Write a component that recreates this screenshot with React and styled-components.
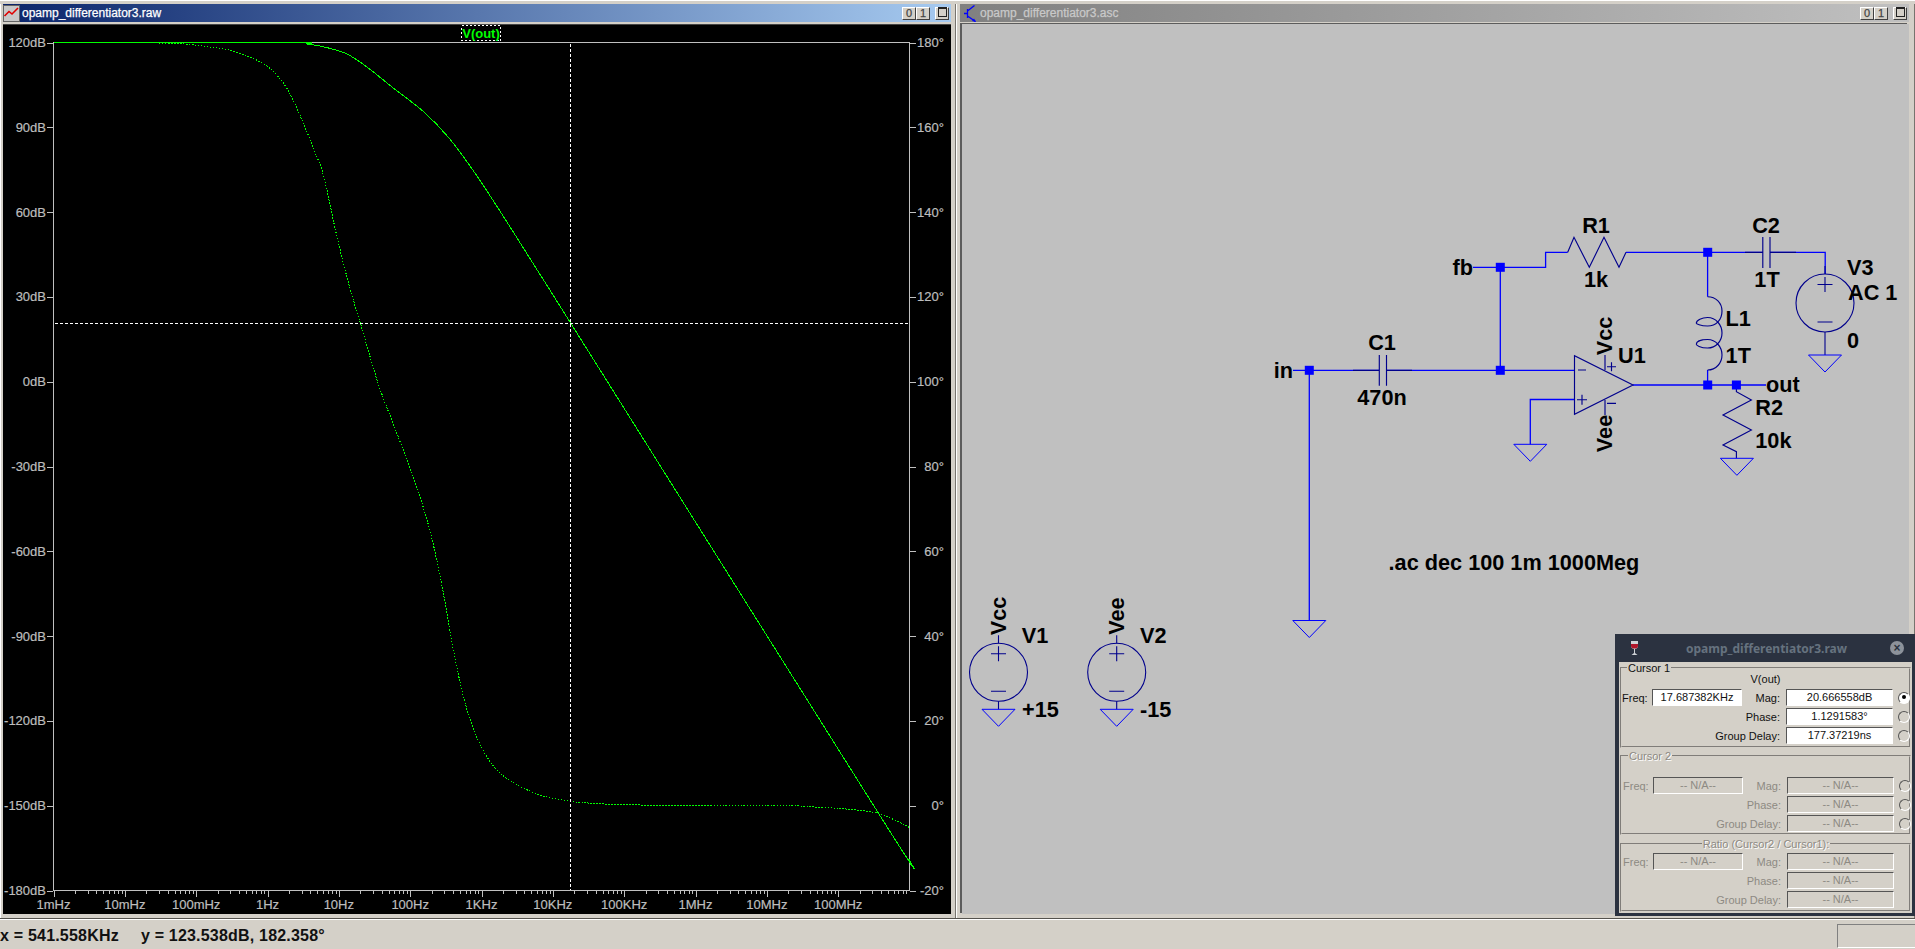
import React from 'react'
import styled, { createGlobalStyle } from 'styled-components'

const Global = createGlobalStyle`
    html, body {
        margin: 0;
        padding: 0;
        overflow: hidden;
        background: #d4d0c8;
    }
    #root {
        width: 1915px;
        height: 949px;
    }
`

const Desktop = styled.div`
    position: relative;
    width: 1915px;
    height: 949px;
    display: flex;
    flex-direction: column;
    background: #d4d0c8;
    font-family: "Liberation Sans", Arial, sans-serif;
    overflow: hidden;
`

const WindowRow = styled.div`
    display: flex;
    height: 919px;
    flex: none;
    padding-top: 4px;
    box-sizing: border-box;
    border-top: 1px solid #fff;
    border-bottom: 1px solid #55534e;
`

const MdiWindow = styled.section`
    box-sizing: border-box;
    width: ${p => p.$width}px;
    height: 914px;
    margin-top: -1px;
    padding: 0 ${p => p.$padRight}px 0 ${p => p.$padLeft}px;
    display: flex;
    flex-direction: column;
    background: #d4d0c8;
    border-left: 1px solid #fff;
    border-right: 1px solid #77746e;
`

const TitleBar = styled.header`
    height: 18px;
    flex: none;
    display: flex;
    align-items: center;
    gap: ${p => p.$gap}px;
    padding: 0 2px 0 ${p => p.$padLeft}px;
    background: ${p => p.$active
        ? 'linear-gradient(90deg, #0a246a, #a6caf0)'
        : 'linear-gradient(90deg, #808080, #c0c0c0)'};
    color: ${p => p.$active ? '#fff' : '#c9c9c9'};
    font-size: 12px;
    -webkit-text-stroke: 0.25px currentColor;
    white-space: nowrap;
`

const TitleButtons = styled.div`
    margin-left: auto;
    display: flex;
`

const TitleButton = styled.button`
    box-sizing: border-box;
    width: 14px;
    height: 13px;
    padding: 0;
    margin-left: ${p => p.$far ? 5 : 0}px;
    border: 1px solid;
    border-color: #fff #404040 #404040 #fff;
    background: #d4d0c8;
    color: #444;
    font: 11px/11px "Liberation Sans", Arial, sans-serif;
    display: flex;
    align-items: center;
    justify-content: center;
`

const RestoreGlyph = styled.span`
    display: block;
    box-sizing: border-box;
    width: 9px;
    height: 10px;
    margin-top: -2px;
    border: 1px solid #222;
    border-top-width: 2px;
    background: #d4d0c8;
`

const Canvas = styled.svg`
    display: block;
    flex: none;
    margin: 2px 0 0 ${p => p.$inset}px;
    width: ${p => p.$width}px;
    height: 890px;
    background: ${p => p.$bg};
    box-shadow: ${p => p.$inset ? '-2px -1px 0 #5c5c5c' : 'inset 0 1px 0 #444'};
`

const AxisText = styled.text`
    font: 13px "Liberation Sans", Arial, sans-serif;
    fill: #bdbdbd;
    stroke: #bdbdbd;
    stroke-width: 0.2px;
`

const TraceName = styled.text`
    font: bold 13px "Liberation Sans", Arial, sans-serif;
    fill: #00ff00;
`

const PartLabel = styled.text`
    font: bold 21.7px "Liberation Sans", Arial, sans-serif;
    fill: #000;
`

const StatusBar = styled.footer`
    flex: 1;
    min-height: 0;
    display: flex;
    border-top: 1px solid #fff;
    font-size: 16px;
    font-weight: bold;
    color: #111;
    line-height: 32px;
    white-space: nowrap;
`

const StatusValue = styled.span`
    margin-right: 22px;
    letter-spacing: 0.2px;
`

const StatusPanel = styled.div`
    align-self: flex-start;
    box-sizing: border-box;
    margin: 4px 0 0 auto;
    width: 78px;
    height: 24px;
    border-left: 1px solid #808080;
    border-top: 1px solid #808080;
    border-bottom: 1px solid #fff;
`

const Dialog = styled.aside`
    position: absolute;
    right: 0;
    top: 634px;
    width: 300px;
    height: 282px;
    box-sizing: border-box;
    display: flex;
    flex-direction: column;
    background: #2b3240;
    padding: 0 3px 3px 4px;
`

const DialogTitle = styled.header`
    position: relative;
    height: 28px;
    flex: none;
    display: flex;
    align-items: center;
    justify-content: center;
    padding-left: 2px;
    color: #66727f;
    font: bold 12px "Noto Sans", sans-serif;
`

const WineIcon = styled.svg`
    position: absolute;
    left: 11px;
    top: 6px;
`

const CloseButton = styled.span`
    position: absolute;
    right: 8px;
    top: 7px;
    width: 14px;
    height: 14px;
    border-radius: 50%;
    background: #8d929b;
    color: #2b3240;
    font: bold 12px/14px "Liberation Sans", sans-serif;
    text-align: center;
`

const DialogBody = styled.div`
    flex: 1;
    display: flex;
    flex-direction: column;
    background: #d4d0c8;
    padding: 0 1px 0 1px;
`

const Group = styled.fieldset`
    margin: ${p => p.$top}px 0 0;
    padding: ${p => p.$padTop}px 0 0 ${p => p.$shift}px;
    min-width: 0;
    height: ${p => p.$height}px;
    box-sizing: border-box;
    border: 2px groove #d4d0c8;
    font-size: 11px;
    color: #111;
`

const GroupTitle = styled.legend`
    margin-left: ${p => p.$center ? 'auto' : '5px'};
    margin-right: ${p => p.$center ? 'auto' : '0'};
    padding: 0 1px;
    font-size: 11px;
    line-height: 12px;
    color: ${p => p.$off ? '#8d8a83' : '#111'};
    text-shadow: ${p => p.$off ? '1px 1px 0 #fff' : 'none'};
`

const TraceTitle = styled.div`
    height: 15px;
    line-height: 11px;
    text-align: center;
`

const FieldGrid = styled.div`
    display: grid;
    grid-template-columns: 30px 90px 44px 107px 22px;
    grid-auto-rows: 17px;
    row-gap: 2px;
    align-items: center;
`

const FieldLabel = styled.label`
    grid-column: ${p => p.$span ? '1 / 4' : 'auto'};
    text-align: ${p => p.$first ? 'left' : 'right'};
    padding-right: ${p => p.$first ? 0 : 6}px;
    color: ${p => p.$off ? '#8d8a83' : '#111'};
`

const FieldValue = styled.output`
    grid-column: ${p => p.$wide ? 4 : 'auto'};
    box-sizing: border-box;
    height: 17px;
    display: block;
    line-height: 15px;
    text-align: center;
    border: 1px solid;
    border-color: #555 #fff #fff #555;
    background: ${p => p.$off ? '#d4d0c8' : '#fff'};
    color: ${p => p.$off ? '#8d8a83' : '#111'};
`

const Radio = styled.span`
    position: relative;
    justify-self: center;
    box-sizing: border-box;
    width: 12px;
    height: 12px;
    border-radius: 50%;
    border: 1.5px solid;
    border-color: #555 #fff #fff #555;
    background: ${p => p.$on ? '#fff' : 'transparent'};
    &::after {
        content: '';
        display: ${p => p.$on ? 'block' : 'none'};
        position: absolute;
        left: 2.5px;
        top: 2.5px;
        width: 4px;
        height: 4px;
        border-radius: 50%;
        background: #000;
    }
`

// ---- plot data, page coordinates read off the original trace ----

const PLOT_LEFT = 53.5
const PLOT_RIGHT = 909.5
const PLOT_TOP = 42.5
const PLOT_BOTTOM = 890.5
const DECADE = (PLOT_RIGHT - PLOT_LEFT) / 12
const DIV_Y = (PLOT_BOTTOM - PLOT_TOP) / 10

const magnitude = [
    [54, 42.5], [289, 42.5], [307, 44], [326.5, 47.5], [347, 54], [367, 67], [392, 87],
    [424.5, 112.5], [449, 138], [473.5, 171], [498, 208], [522.4, 246.5], [547, 285.5],
    [570.6, 323], [880, 815.7], [909.5, 860],
]

const phase = [
    [147, 42.7], [183.7, 44], [208, 46.7], [228.6, 50], [249, 56.7], [265.3, 65], [277.6, 76],
    [289, 92], [302, 120], [314, 150], [323.6, 176], [335.9, 232], [348, 281], [361.5, 327],
    [378.6, 384.7], [397, 433.6], [415, 482], [430, 531], [442, 586], [454, 653], [466.5, 708],
    [482.4, 749], [503, 775.5], [537, 794], [570, 801], [588, 803], [640, 805], [773, 805.3],
    [820, 807.3], [856.7, 810], [880, 814], [903, 824], [909.5, 827.7],
]

const smooth = pts => {
    let d = `M${pts[0][0]} ${pts[0][1]}`
    for (let i = 0; i < pts.length - 1; i++) {
        const p0 = pts[i - 1] || pts[i]
        const p1 = pts[i]
        const p2 = pts[i + 1]
        const p3 = pts[i + 2] || p2
        const c1 = [p1[0] + (p2[0] - p0[0]) / 6, p1[1] + (p2[1] - p0[1]) / 6]
        const c2 = [p2[0] - (p3[0] - p1[0]) / 6, p2[1] - (p3[1] - p1[1]) / 6]
        d += `C${c1[0]} ${c1[1]} ${c2[0]} ${c2[1]} ${p2[0]} ${p2[1]}`
    }
    return d
}

const freqLabels = ['1mHz', '10mHz', '100mHz', '1Hz', '10Hz', '100Hz', '1KHz', '10KHz', '100KHz', '1MHz', '10MHz', '100MHz']

const Plot = () => {
    const minor = []
    for (let d = 0; d < 12; d++) {
        for (let m = 2; m < 10; m++) minor.push(PLOT_LEFT + (d + Math.log10(m)) * DECADE)
    }
    return (
        <Canvas $width={948} $inset={0} $bg="#000" viewBox="3 24 948 890">
            <g stroke="#c0c0c0" shapeRendering="crispEdges" fill="none">
                <rect x={PLOT_LEFT} y={PLOT_TOP} width={PLOT_RIGHT - PLOT_LEFT} height={PLOT_BOTTOM - PLOT_TOP} />
                {Array.from({ length: 11 }, (_, i) => (
                    <path key={i} d={`M47 ${Math.round(PLOT_TOP + i * DIV_Y) + 0.5}H53M910 ${Math.round(PLOT_TOP + i * DIV_Y) + 0.5}H916`} />
                ))}
                {freqLabels.map((_, i) => (
                    <path key={i} d={`M${Math.round(PLOT_LEFT + i * DECADE) + 0.5} 891V897`} />
                ))}
                {minor.map((x, i) => (
                    <path key={i} d={`M${Math.round(x) + 0.5} 891V894`} />
                ))}
            </g>
            {Array.from({ length: 11 }, (_, i) => (
                <AxisText key={i} x={46} y={PLOT_TOP + i * DIV_Y + 4.5} textAnchor="end">{120 - i * 30}dB</AxisText>
            ))}
            {Array.from({ length: 11 }, (_, i) => (
                <AxisText key={i} x={944} y={PLOT_TOP + i * DIV_Y + 4.5} textAnchor="end">{180 - i * 20}°</AxisText>
            ))}
            {freqLabels.map((label, i) => (
                <AxisText key={label} x={PLOT_LEFT + i * DECADE} y={908.5} textAnchor="middle">{label}</AxisText>
            ))}
            <path d={smooth(phase)} fill="none" stroke="#00ff00" strokeDasharray="1.5 1.5" shapeRendering="crispEdges" />
            <path d={smooth(magnitude)} fill="none" stroke="#00ff00" shapeRendering="crispEdges" />
            <g stroke="#fff" strokeDasharray="3 2" shapeRendering="crispEdges">
                <path d="M570.5 44V890" />
                <path d="M55 323.5H909" />
            </g>
            <rect x="461.5" y="25.5" width="39" height="15" fill="#000" stroke="#fff" strokeDasharray="2 2" shapeRendering="crispEdges" />
            <TraceName x={481} y={38} textAnchor="middle">V(out)</TraceName>
        </Canvas>
    )
}

// ---- schematic parts ----

const WIRE = '#0000ff'
const PART = '#00008c'

const Ground = ({ x, y }) => (
    <path d={`M${x - 16.5} ${y}H${x + 16.5}L${x} ${y + 17}Z`} fill="none" stroke={WIRE} strokeWidth="1" />
)

const Junction = ({ x, y }) => <rect x={x - 4.5} y={y - 4.5} width="9" height="9" fill={WIRE} />

const Source = ({ x, y, lead }) => (
    <g fill="none" stroke={PART}>
        <circle cx={x} cy={y} r="29" strokeWidth="1.1" />
        <path d={`M${x} ${y - 37}V${y - 29}M${x} ${y - 26}V${y - 11}M${x - 7.5} ${y - 18.5}H${x + 7.5}M${x - 7.5} ${y + 19}H${x + 7.5}M${x} ${y + 29}V${y + 29 + lead}`} strokeWidth="1.1" />
        <Ground x={x} y={y + 29 + lead} />
    </g>
)

const VLabel = ({ x, y, children }) => (
    <PartLabel transform={`rotate(-90 ${x} ${y})`} x={x} y={y + 7.5} textAnchor="middle">{children}</PartLabel>
)

const Schematic = () => (
    <Canvas $width={947} $inset={2} $bg="#c0c0c0" viewBox="962 24 947 890">
        <g fill="none" stroke={WIRE} strokeWidth="1.3">
            <path d="M1293 370.3H1379M1386.5 370.3H1574.5" />
            <path d="M1309.3 370.3V620.5" />
            <path d="M1500.3 370.3V267.3M1473 267.3H1545.6V252.3H1567.7" />
            <path d="M1626 252.3H1762.8M1770 252.3H1825.2V274" />
            <path d="M1707.6 252.3V296.7" />
            <path d="M1633 385H1766" />
            <path d="M1574.5 399.5H1530.3V444.3" />
            <path d="M1707.6 370V385" />
        </g>
        <g fill="none" stroke={PART} strokeWidth="1.15">
            <path d="M1353 370.3H1379.3M1379.3 355V385.7M1386.5 355V385.7M1386.5 370.3H1412" />
            <path d="M1762.8 237V268M1770 237V268M1745 252.3H1762.8M1770 252.3H1796" />
            <path d="M1567.7 252.3L1574 237.3L1589.3 267.3L1604 237.3L1619 267.3L1626 252.3" />
            <path d="M1736.4 385V391.7L1751.4 400L1723 415L1751.4 430L1723 445L1736.4 451.7V458.3" />
            <path d="M1707.6 296.7C1716 296.7 1722 303 1722 311C1722 320 1716 326 1707.6 326C1700 326 1696.3 323.5 1696.3 323.3C1696.3 320 1702 317.5 1707.6 317.5C1716 317.5 1722 325 1722 333C1722 341 1716 348 1707.6 348C1700 348 1696.3 345 1696.3 344.3C1696.3 341 1702 339.5 1707.6 339.5C1716 339.5 1722 347 1722 355C1722 363 1716 370 1707.6 370" />
            <path d="M1574.5 355.7V414.3L1633 385Z" />
            <path d="M1578 370H1586M1577 399.7H1587M1582 394.7V404.7M1607 366.7H1616M1611.5 362.2V371.2M1607 403.3H1616" />
            <path d="M1605 355V370M1605 400V415" />
        </g>
        <Ground x={1309.3} y={620.5} />
        <Ground x={1530.3} y={444.3} />
        <Ground x={1736.9} y={458.3} />
        <Source x={1825} y={303} lead={23} />
        <Source x={998.5} y={672.3} lead={8} />
        <Source x={1116.7} y={672.3} lead={8} />
        <Junction x={1309.3} y={370.3} />
        <Junction x={1500.3} y={370.3} />
        <Junction x={1500.3} y={267.3} />
        <Junction x={1707.7} y={252.3} />
        <Junction x={1707.7} y={385} />
        <Junction x={1736.4} y={385} />

        <PartLabel x={1293} y={378} textAnchor="end">in</PartLabel>
        <PartLabel x={1473} y={275} textAnchor="end">fb</PartLabel>
        <PartLabel x={1766} y={392}>out</PartLabel>
        <PartLabel x={1382} y={350} textAnchor="middle">C1</PartLabel>
        <PartLabel x={1382} y={405} textAnchor="middle">470n</PartLabel>
        <PartLabel x={1596} y={232.5} textAnchor="middle">R1</PartLabel>
        <PartLabel x={1596} y={287} textAnchor="middle">1k</PartLabel>
        <PartLabel x={1766} y={232.5} textAnchor="middle">C2</PartLabel>
        <PartLabel x={1767} y={287} textAnchor="middle">1T</PartLabel>
        <PartLabel x={1847} y={275}>V3</PartLabel>
        <PartLabel x={1848} y={300}>AC 1</PartLabel>
        <PartLabel x={1847} y={348}>0</PartLabel>
        <PartLabel x={1725.6} y={326}>L1</PartLabel>
        <PartLabel x={1725.6} y={363}>1T</PartLabel>
        <PartLabel x={1755.3} y={415}>R2</PartLabel>
        <PartLabel x={1755.3} y={448}>10k</PartLabel>
        <PartLabel x={1618} y={363}>U1</PartLabel>
        <VLabel x={1604} y={336}>Vcc</VLabel>
        <VLabel x={1604} y={433.5}>Vee</VLabel>
        <VLabel x={998.3} y={616}>Vcc</VLabel>
        <VLabel x={1116.7} y={616}>Vee</VLabel>
        <PartLabel x={1021.7} y={643}>V1</PartLabel>
        <PartLabel x={1140} y={643}>V2</PartLabel>
        <PartLabel x={1022} y={716.5}>+15</PartLabel>
        <PartLabel x={1140} y={716.5}>-15</PartLabel>
        <PartLabel x={1388.6} y={569.5}>.ac dec 100 1m 1000Meg</PartLabel>
    </Canvas>
)

const GraphIcon = () => (
    <svg width="17" height="17" viewBox="0 0 17 17">
        <rect width="17" height="17" fill="#c8c8c8" />
        <rect x="0.5" y="0.5" width="16" height="16" fill="none" stroke="#000" strokeDasharray="1 1" />
        <path d="M1.5 11L6 6.5L9 9L15 3" fill="none" stroke="#e00000" strokeWidth="1.6" />
    </svg>
)

const TransistorIcon = () => (
    <svg width="13" height="17" viewBox="0 0 13 17">
        <path d="M0 8.5H3.5M3.5 4V13M3.5 6L10.5 0.5M3.5 11L11.5 16.5" fill="none" stroke="#0000ff" strokeWidth="1.3" />
        <path d="M12 17L8 16L10 13.5Z" fill="#0000ff" />
    </svg>
)

const WindowButtons = () => (
    <TitleButtons>
        <TitleButton>0</TitleButton>
        <TitleButton>1</TitleButton>
        <TitleButton $far><RestoreGlyph /></TitleButton>
    </TitleButtons>
)

const Fields = ({ freq, mag, phs, delay, off, radios, selected }) => (
    <FieldGrid>
        <FieldLabel $first $off={off}>Freq:</FieldLabel>
        <FieldValue $off={off}>{freq}</FieldValue>
        <FieldLabel $off={off}>Mag:</FieldLabel>
        <FieldValue $off={off}>{mag}</FieldValue>
        {radios ? <Radio $on={selected} /> : <span />}
        <FieldLabel $span $off={off}>Phase:</FieldLabel>
        <FieldValue $wide $off={off}>{phs}</FieldValue>
        {radios ? <Radio /> : <span />}
        <FieldLabel $span $off={off}>Group Delay:</FieldLabel>
        <FieldValue $wide $off={off}>{delay}</FieldValue>
        {radios ? <Radio /> : <span />}
    </FieldGrid>
)

const NA = '-- N/A--'

const CursorDialog = () => (
    <Dialog>
        <DialogTitle>
            <WineIcon width="9" height="16" viewBox="0 0 9 16">
                <path d="M1 1H8V6C8 8 6 9 5 9V13L7.5 15H1.5L4 13V9C3 9 1 8 1 6Z" fill="#cfd2d6" />
                <path d="M1 4H8V6C8 8 6 8.6 4.5 8.6C3 8.6 1 8 1 6Z" fill="#b0162a" />
            </WineIcon>
            opamp_differentiator3.raw
            <CloseButton>×</CloseButton>
        </DialogTitle>
        <DialogBody>
            <Group $top={0} $padTop={0} $shift={0} $height={86}>
                <GroupTitle>Cursor 1</GroupTitle>
                <TraceTitle>V(out)</TraceTitle>
                <Fields freq="17.687382KHz" mag="20.666558dB" phs="1.1291583°" delay="177.37219ns" radios selected />
            </Group>
            <Group $top={2} $padTop={15} $shift={1} $height={85}>
                <GroupTitle $off>Cursor 2</GroupTitle>
                <Fields freq={NA} mag={NA} phs={NA} delay={NA} off radios />
            </Group>
            <Group $top={3} $padTop={3} $shift={1} $height={74}>
                <GroupTitle $center $off>Ratio (Cursor2 / Cursor1):</GroupTitle>
                <Fields freq={NA} mag={NA} phs={NA} delay={NA} off />
            </Group>
        </DialogBody>
    </Dialog>
)

const App = () => (
    <Desktop>
        <Global />
        <WindowRow>
            <MdiWindow $width={956} $padLeft={2} $padRight={4}>
                <TitleBar $active $gap={2} $padLeft={0}>
                    <GraphIcon />
                    opamp_differentiator3.raw
                    <WindowButtons />
                </TitleBar>
                <Plot />
            </MdiWindow>
            <MdiWindow $width={959} $padLeft={3} $padRight={5}>
                <TitleBar $gap={3} $padLeft={4}>
                    <TransistorIcon />
                    opamp_differentiator3.asc
                    <WindowButtons />
                </TitleBar>
                <Schematic />
            </MdiWindow>
        </WindowRow>
        <StatusBar>
            <StatusValue>x = 541.558KHz</StatusValue>
            <StatusValue>y = 123.538dB, 182.358°</StatusValue>
            <StatusPanel />
        </StatusBar>
        <CursorDialog />
    </Desktop>
)

export default App
